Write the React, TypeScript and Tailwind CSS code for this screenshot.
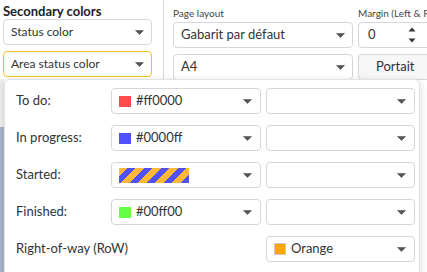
import type { ReactNode } from "react";

type Row = {
  label: string;
  swatch?: string;
  hex?: string;
  striped?: boolean;
};

const rows: Row[] = [
  { label: "To do:", swatch: "bg-[#ff4b4b]", hex: "#ff0000" },
  { label: "In progress:", swatch: "bg-[#5050ff]", hex: "#0000ff" },
  { label: "Started:", striped: true },
  { label: "Finished:", swatch: "bg-[#66ff44]", hex: "#00ff00" },
];

function Caret() {
  return (
    <svg width="9" height="5" viewBox="0 0 9 5" className="shrink-0">
      <path d="M0.5 0.5 H8.5 L4.5 4.5 Z" fill="#555" stroke="#555" strokeWidth="0.6" strokeLinejoin="round" />
    </svg>
  );
}

function Select({
  children,
  className = "",
  focused = false,
}: {
  children?: ReactNode;
  className?: string;
  focused?: boolean;
}) {
  return (
    <div
      className={`flex h-[26px] items-center rounded-[4px] border bg-white pl-[7px] pr-[7px] ${
        focused ? "border-[#f2c21b]" : "border-[#d3d6db]"
      } ${className}`}
    >
      <div className="flex min-w-0 flex-1 items-center gap-[5px] whitespace-nowrap">{children}</div>
      <Caret />
    </div>
  );
}

export default function App() {
  return (
    <div className="relative h-[272px] w-[427px] overflow-hidden bg-white font-['Lato',sans-serif] text-[12px] text-[#333]">
      <div className="flex h-full">
        {/* left panel */}
        <div className="flex w-[164px] shrink-0 flex-col border-r border-[#d6d6d6] pr-[11px]">
          <h2 className="h-[19px] pl-[3px] pt-[3px] text-[13px] font-bold leading-[16px] text-[#222]">
            Secondary colors
          </h2>
          <div className="flex flex-col gap-[6px] pl-[3px]">
            <Select>Status color</Select>
            <Select focused>Area status color</Select>
          </div>
          <div className="mt-[2px] flex w-[4px] flex-1 flex-col">
            <div className="h-[48px] bg-[#eeeeee]" />
            <div className="flex-1 bg-[#a9b5c9]" />
          </div>
        </div>

        {/* right panel */}
        <div className="flex flex-1 gap-[5px] overflow-hidden pl-[9px]">
          <div className="flex w-[180px] shrink-0 flex-col gap-[6px]">
            <div className="h-[16px] pt-[7px] text-[10px] leading-[12px] text-[#444]">Page layout</div>
            <Select className="pr-[6px] text-[13px]">Gabarit par défaut</Select>
            <Select className="pr-[6px] text-[13px]">A4</Select>
          </div>
          <div className="flex w-[90px] shrink-0 flex-col gap-[6px]">
            <div className="h-[16px] whitespace-nowrap pt-[7px] text-[10px] leading-[12px] text-[#444]">
              Margin (Left &amp; Right)
            </div>
            <div className="flex h-[26px] items-center rounded-l-[4px] border border-[#d3d6db] pl-[9px] text-[13px]">
              <span className="flex-1">0</span>
              <div className="mr-[31px] flex flex-col gap-[6px]">
                <svg width="8" height="5" viewBox="0 0 8 5">
                  <path d="M0.5 4.5 H7.5 L4 0.5 Z" fill="#333" />
                </svg>
                <svg width="8" height="5" viewBox="0 0 8 5">
                  <path d="M0.5 0.5 H7.5 L4 4.5 Z" fill="#333" />
                </svg>
              </div>
            </div>
            <div className="flex h-[26px] items-center rounded-l-[4px] border border-[#d3d6db] bg-[#f7f7f7] pl-[17px] text-[13px]">
              Portait
            </div>
          </div>
        </div>
      </div>

      {/* dropdown popover */}
      <div className="absolute bottom-[-12px] left-[4px] top-[79px] w-[416px] rounded-[5px] border border-[#e2e2e2] bg-white pl-[11px] pt-[8px] shadow-[0_2px_8px_rgba(0,0,0,0.14)]">
        <div className="grid grid-cols-[90px_150px_149px] gap-x-[5px] gap-y-[11px] text-[13px]">
          {rows.map((row) => (
            <div key={row.label} className="contents">
              <div className="flex h-[26px] items-center">{row.label}</div>
              <Select className="pr-[8px]">
                {row.striped ? (
                  <span className="h-[15px] w-[70px] bg-[repeating-linear-gradient(135deg,#ffb833_0px,#ffb833_6px,#5050ff_6px,#5050ff_12px)]" />
                ) : (
                  <>
                    <span className={`h-[11px] w-[12px] ${row.swatch}`} />
                    <span>{row.hex}</span>
                  </>
                )}
              </Select>
              <Select className="pr-[8px]" />
            </div>
          ))}
          <div className="col-span-2 flex h-[26px] items-center">Right-of-way (RoW)</div>
          <Select className="pr-[8px]">
            <span className="h-[12px] w-[12px] border border-[#c9c9c9] bg-[#ffa500]" />
            <span>Orange</span>
          </Select>
        </div>
      </div>
    </div>
  );
}
